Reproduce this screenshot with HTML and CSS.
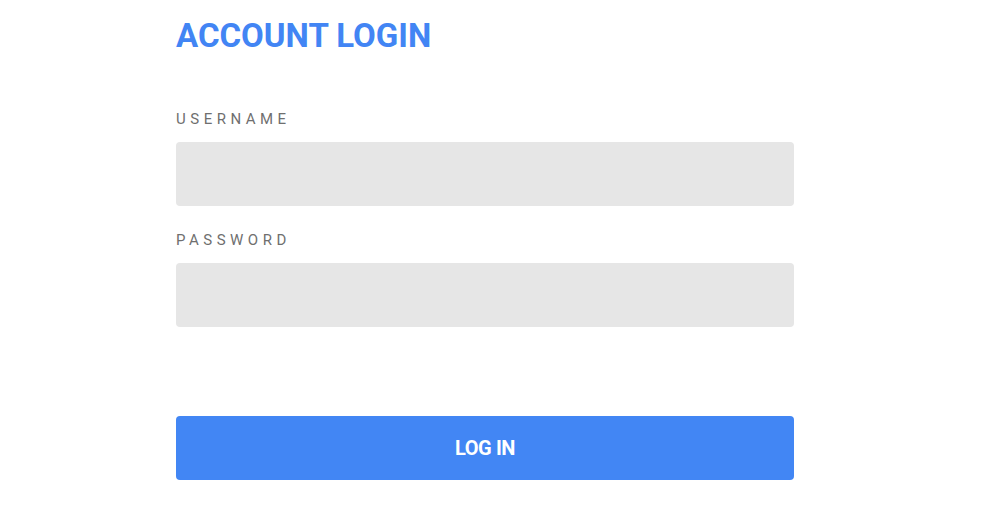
FILE: index.html
```html
<!DOCTYPE html>
<html lang="en">
<head>
<meta charset="utf-8">
<title>Account Login</title>
<link rel="stylesheet" href="styles.css">
</head>
<body>
<main class="page">
  <form class="login">
    <h1 class="title">ACCOUNT LOGIN</h1>
    <label class="label" for="u">USERNAME</label>
    <input class="field" id="u" type="text">
    <label class="label label-pw" for="p">PASSWORD</label>
    <input class="field" id="p" type="password">
    <button class="btn" type="button">LOG IN</button>
  </form>
</main>
</body>
</html>
```
FILE: styles.css
```css
html, body {
  margin: 0;
  padding: 0;
  background: #ffffff;
}
body {
  font-family: Roboto, "Liberation Sans", Arial, sans-serif;
}
.page {
  padding-left: 176px;
  padding-top: 16px;
}
.login {
  width: 618px;
  display: flex;
  flex-direction: column;
}
.title {
  margin: 0;
  font-size: 33px;
  font-weight: 700;
  color: #4285f4;
  line-height: 40px;
  letter-spacing: 0;
}
.label {
  margin-top: 55px;
  font-size: 15px;
  line-height: 16px;
  letter-spacing: 4.5px;
  color: #6f6f6f;
  font-weight: 400;
}
.label-pw {
  margin-top: 26px;
}
.field {
  margin-top: 15px;
  height: 64px;
  border: none;
  border-radius: 4px;
  background: #e6e6e6;
  padding: 0 16px;
  box-sizing: border-box;
  font: inherit;
}
.btn {
  margin-top: 89px;
  height: 64px;
  border: none;
  border-radius: 4px;
  background: #4286f4;
  color: #ffffff;
  font-family: inherit;
  font-size: 20px;
  font-weight: 700;
  letter-spacing: -0.4px;
}
```
